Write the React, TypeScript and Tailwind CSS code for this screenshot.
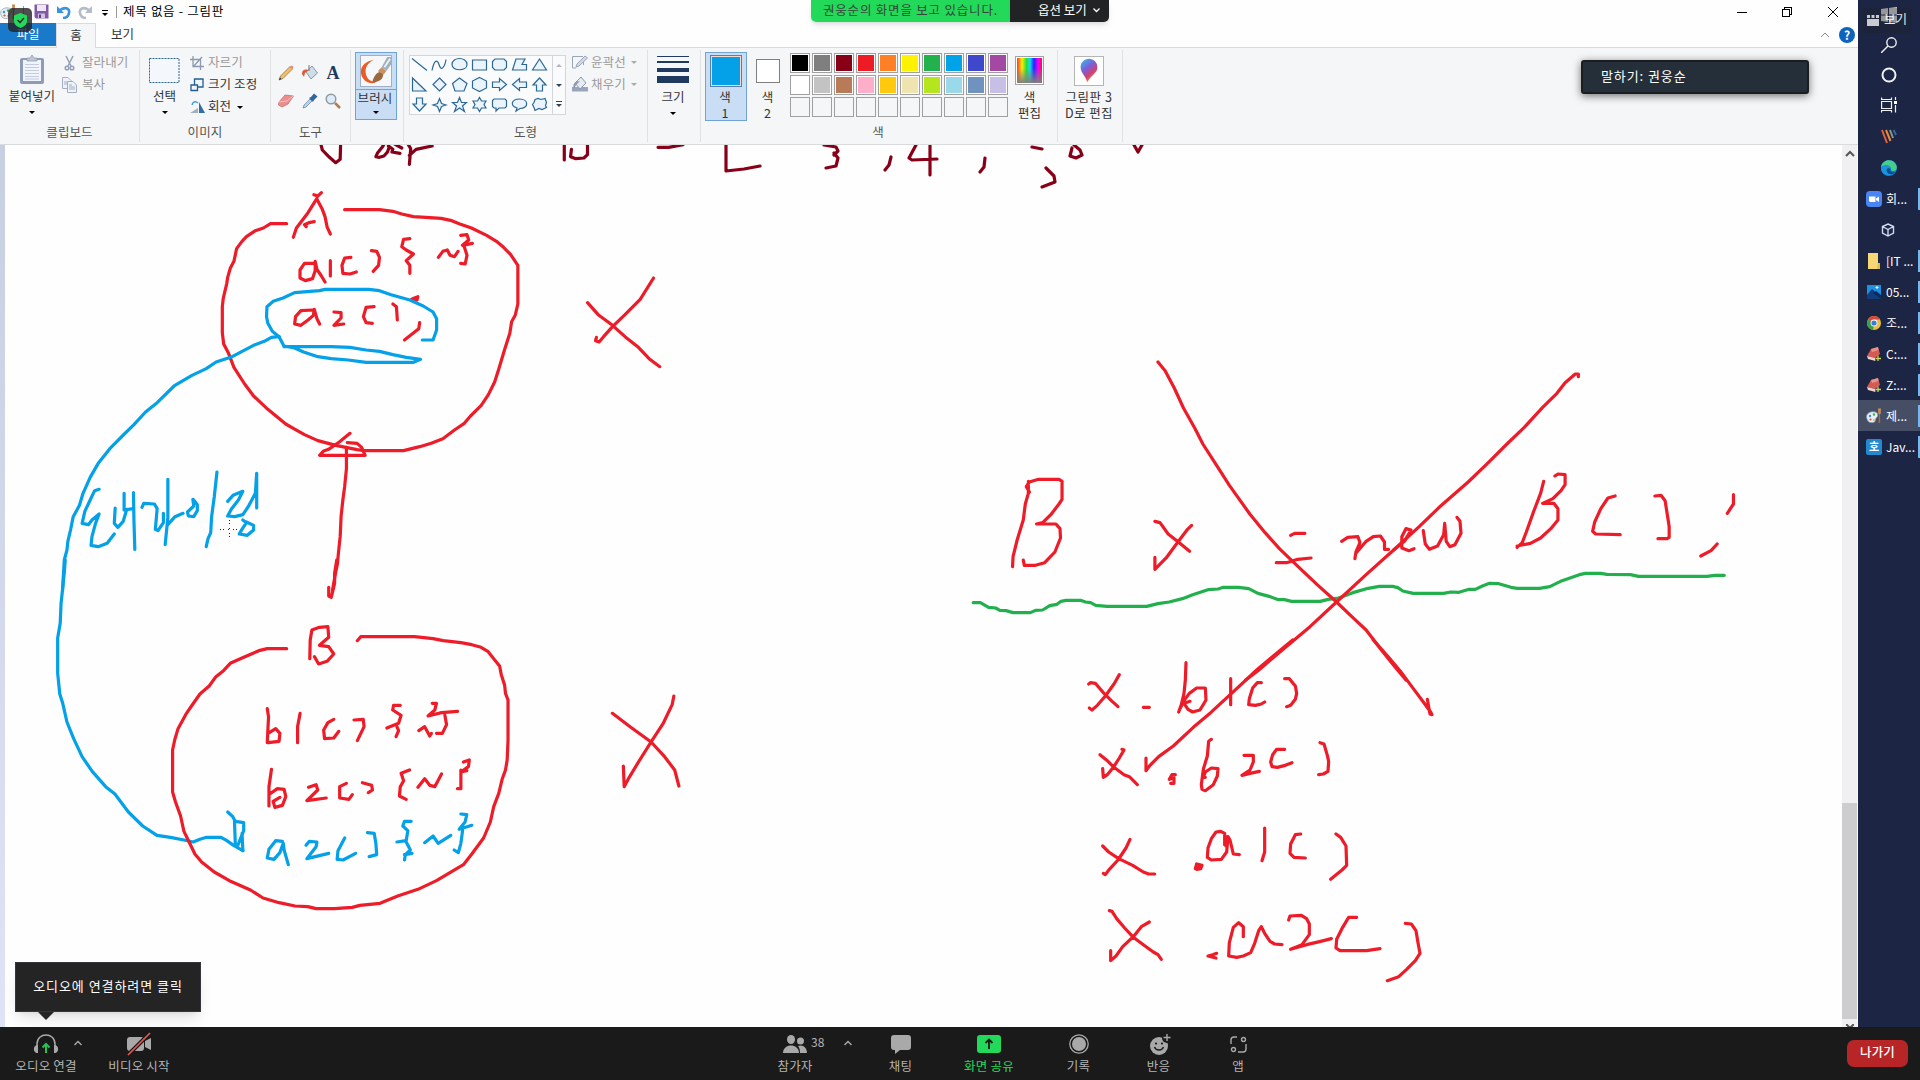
import React from "react";

type Group = { transform: string; strokes: [string, string][] };

const RED = "#ed1c28";
const BLUE = "#04a0e8";
const GREEN = "#22b04c";
const MAROON = "#880018";

// Brush strokes, grouped by the area of the sheet they belong to.
const drawing: Group[] = [
  {
    transform: "translate(0 140) scale(0.44643 0.33333)",
    strokes: [
      [MAROON, "M718 8 L722 30 738 52 752 68 762 58 763 8"],
      [MAROON, "M862 8 L856 22 846 38 842 50 850 52 860 48 868 36 872 20 M870 18 L880 28 878 36 896 40 M884 12 L900 24 M912 8 L920 26 917 73 M917 46 L932 28 968 18"],
      [MAROON, "M1264 8 V60 M1280 28 L1278 50 1290 56 1308 54 1316 44 1316 8"],
      [MAROON, "M1474 22 H1498 L1530 14"],
      [RED, "M703 164 L712 168 720 158 M710 175 L690 218 664 264 657 292 M710 178 L722 208 728 230 733 262 740 282 M704 245 L692 248 682 254 686 260"],
      [RED, "M642 251 H606 L590 264 572 272 552 290 542 304 530 326 524 364 516 384 510 412 508 430 500 476 498 500 V578 L501 612 512 640 524 682 548 732 568 768 600 808 640 852 658 866 682 884 712 902 752 916 800 929 816 932 H904 L940 920 966 910 992 896 1018 870 1040 850 1054 828 1078 796 1094 764 1108 726 1118 684 1130 630 1142 580 1146 545 1154 526 1160 492 V376 L1144 344 1128 322 1112 304 1090 286 1056 264 1030 252 1012 242 988 235 954 232 926 230 900 222 880 214 850 209 H772"],
      [RED, "M704 370 L682 370 672 390 672 414 684 422 700 416 706 392 706 364 710 388 720 408 728 426 M740 362 V408 M786 352 L772 354 766 376 768 400 784 402 798 396 M832 332 L844 334 850 352 848 376 836 394"],
      [RED, "M918 296 L904 298 900 320 910 330 926 342 910 362 918 376 918 400 M982 352 L992 334 1002 330 1008 346 1018 350 1026 334 M1032 286 L1046 284 1050 300 1036 316 1058 310 M1040 320 L1046 346 1042 372 1032 370"],
      [RED, "M700 510 L674 512 662 530 660 552 674 556 690 540 702 526 704 508 710 536 716 552 M748 516 L764 518 764 534 748 556 770 552 M838 500 L820 502 814 530 820 548 834 550 M880 492 L888 500 890 540 M940 548 L938 566 906 600 M924 476 L936 470 934 480 922 478"],
      [BLUE, "M625 590 L610 574 600 550 597 530 598 500 612 484 634 474 660 458 716 452 728 448 H826 L850 452 876 464 918 480 948 498 970 516 978 536 978 570 970 600 H946"],
      [BLUE, "M625 590 L608 592 592 604 568 616 520 650 484 666 462 686 430 706 390 738 352 788 326 816 300 854 274 888 246 926 220 970 202 1012 186 1060 178 1096 164 1130 158 1170 152 1204 150 1230 144 1260 140 1350"],
      [BLUE, "M625 590 L636 618 660 624 680 636 712 650 742 656 780 660 820 667 H926 L942 658 910 652 880 644 850 634 820 630 784 622 742 620 H636"],
      [RED, "M784 880 L760 906 736 928 724 934 716 946 H818 L810 922 800 910 778 908 M776 922 V986 L772 1040 768 1080 764 1130 762 1190 758 1240 756 1270 750 1310 745 1350"],
      [RED, "M1316 488 L1340 524 1372 556 1400 590 1430 622 1454 656 1478 680 M1464 414 L1434 478 1400 524 1372 560 1352 590 1342 606 1334 602 1336 592"],
      [BLUE, "M222 1048 L212 1052 202 1080 190 1114 184 1150 198 1154 206 1140 222 1122 214 1150 206 1190 204 1216 220 1220 240 1210 256 1182"],
      [BLUE, "M258 1104 L256 1150 264 1162 276 1144 284 1108 M278 1060 V1110 M278 1110 L298 1106 M299 1058 L300 1140 302 1228 M318 1102 L322 1090 346 1092 352 1106 348 1168 354 1172 366 1148 366 1120 M376 1018 V1132 L370 1214 M376 1154 L392 1130 410 1120"],
      [BLUE, "M432 1078 L434 1098 420 1116 422 1128 434 1130 442 1112 442 1094 434 1080 M486 996 L480 1070 474 1130 472 1178 466 1196 462 1220"],
      [BLUE, "M510 1084 L522 1066 544 1054 534 1080 518 1108 510 1128 526 1130 544 1124 556 1100 572 1060 575 1000 V1104 M544 1140 L552 1148 542 1168 536 1182 554 1186 568 1170 568 1156 552 1146"],
    ],
  },
  {
    transform: "translate(40 560) scale(0.42088 0.33333)",
    strokes: [
      [BLUE, "M60 0 L58 34 54 84 50 130 48 190 42 234 V340 L47 402 54 430 64 486 80 536 100 590 124 634 156 680 178 702 210 756 244 798 278 826 310 832 342 840 364 846 380 838 396 832 H430 L444 842 460 856 482 872"],
      [BLUE, "M446 756 L458 770 464 784 484 788 V812 L470 856 M462 782 L464 850 M480 820 L482 872"],
      [RED, "M705 0 L700 40 700 70 692 112 686 108 686 82"],
      [RED, "M586 266 H540 L520 272 480 294 452 310 436 332 418 350 402 378 380 402 360 438 348 460 328 506 320 540 315 570 V696 L322 726 334 768 342 814 352 840 368 882 384 906 414 936 450 962 500 990 530 1014 568 1028 606 1038 636 1040 656 1046 H700 L742 1042 760 1036 808 1030 850 1008 898 988 942 962 1006 914 1026 882 1054 834 1070 786 1078 740 1090 700 1098 658 1106 630 1110 600 1112 540 V420 L1106 400 1104 376 1096 344 1092 318 1078 296 1064 274 1048 262 1026 254 1000 248 958 242 934 236 890 230 H762 L754 242"],
      [RED, "M641 296 L642 240 646 210 664 202 684 200 686 232 664 256 686 260 698 282 682 304 662 312 652 290"],
      [RED, "M540 446 L543 470 540 548 M542 520 L560 506 570 520 568 544 542 548 M618 460 L612 500 612 548 M698 478 L684 488 674 510 676 536 698 534 710 514 M746 480 L768 478 770 500 754 542"],
      [RED, "M856 436 L840 436 838 450 858 466 852 490 824 504 M848 500 L852 512 846 530 M900 512 L914 500 926 528 930 520 M932 430 L942 430 938 450 922 468 954 458 992 454 M962 466 L966 494 956 520 942 520"],
      [RED, "M550 628 L544 680 544 738 M546 702 L564 686 580 688 584 710 576 736 558 742 554 724 570 712 M638 682 L656 674 660 690 634 722 680 714 M728 670 L712 680 712 714 734 718 742 704 M766 668 L788 676 790 690 780 698"],
      [RED, "M878 630 L858 640 864 662 856 680 854 708 870 718 M898 682 L914 656 926 676 938 680 954 642 M1006 606 L1020 600 1018 620 1000 636 L1014 632 M1000 630 V686 H992"],
      [BLUE, "M576 844 L560 842 544 868 540 894 556 898 570 878 578 850 580 870 590 914 M632 856 L640 844 658 846 656 860 634 896 686 880 M724 834 L708 872 706 898 720 900 750 880 M778 818 L794 820 798 850 800 884 782 890"],
      [BLUE, "M882 784 L866 784 862 798 874 812 870 842 848 846 M870 846 L880 870 868 884 866 900 M866 884 L884 880 M914 848 L934 828 946 850 976 826 M1000 762 L1014 764 1010 786 996 808 1026 796 M1004 812 L1000 850 994 878 984 870"],
      [RED, "M1360 460 L1402 500 1452 546 1484 590 1508 630 1518 678 M1506 408 L1502 434 1480 492 1452 546 1420 610 1400 652 1388 680 1386 618"],
    ],
  },
  {
    transform: "translate(960 340) scale(0.5102 0.33333)",
    strokes: [
      [GREEN, "M26 788 H40 L56 802 70 804 78 811 90 812 104 818 H138 L148 811 162 810 176 797 190 793 198 784 208 781 H236 L246 786 256 788 266 796 288 799 H366 L388 791 410 786 436 776 456 764 486 749 506 747 516 742 H546 L566 746 584 760 606 769 624 779 636 779 650 784 H706 L722 778 742 774 770 758 800 745 822 739 H848 L858 743 868 753 888 760 H948 L962 756 978 757 998 748 1010 748 1024 738 1038 730 1056 731 1080 742 1092 745 H1136 L1156 740 1180 722 1214 704 1226 700 H1256 L1268 703 1314 704 1330 709 H1464 L1480 706 H1498"],
      [RED, "M388 66 L402 92 420 144 438 204 460 264 476 312 502 374 528 436 568 522 598 578 626 626 652 664 700 734 738 786 768 830 796 870 826 930 850 976 874 1020"],
      [RED, "M1212 110 V102 H1206 L1186 128 1170 160 1142 202 1106 262 1072 312 1034 370 996 426 942 498 900 560 850 630 796 704 738 786 686 860 624 940 584 992 560 1020"],
      [RED, "M136 456 L130 440 136 426 154 418 H194 L200 424 V478 L194 492 178 524 162 548 150 552 H188 L196 566 197 594 186 636 166 668 148 676 H126 L124 660 M134 424 L134 460 128 492 124 540 112 600 104 650 103 680"],
      [RED, "M382 544 L392 548 408 582 428 606 450 634 M454 556 L446 568 426 608 404 654 382 688 V652"],
      [RED, "M648 586 L656 580 H676 M620 668 H640 L662 658 688 654"],
      [RED, "M748 604 L760 592 780 590 784 608 776 636 774 656 M776 640 L796 604 810 590 824 588 832 606 832 628 840 628 M850 630 L872 602 884 570 874 566 866 590 866 624 880 632 890 626 M908 572 L912 612 920 628 936 618 948 584 950 550 953 604 960 620 970 614 982 580 980 544 974 532"],
      [RED, "M1144 424 L1138 460 1124 516 1110 576 1102 608 1092 622 M1166 408 L1172 402 1186 404 V434 L1178 452 1162 476 1142 490 H1164 L1172 506 V540 L1158 566 1138 594 1118 610 1092 618"],
      [RED, "M1284 468 L1270 474 1256 506 1244 546 1240 574 1246 582 1294 584 M1362 468 L1374 466 1382 482 1388 540 1390 560 1390 592 1386 596 1368 596 M1516 464 V492 L1504 520 M1484 612 L1472 632 1452 648"],
    ],
  },
  {
    transform: "translate(1040 640) scale(0.33333)",
    strokes: [
      [RED, "M758 0 L700 48 650 90 590 146 512 218 460 262 400 318 356 350 330 376 318 392 V354 M1000 0 L1044 50 1080 92 1120 146 1150 186 1172 216 1176 224 1170 222 1162 178"],
      [RED, "M146 132 L152 128 166 130 190 158 214 182 234 200 M238 104 L222 132 196 168 172 196 156 210 148 204 M310 202 H328"],
      [RED, "M438 68 L436 120 432 160 424 194 416 216 M420 206 L432 182 448 160 470 144 496 144 498 180 480 210 458 216 444 208 432 190 450 184 M572 116 V194 M664 128 L652 128 638 144 628 176 626 194 646 196 664 192 674 186 M734 116 H748 L766 138 770 160 766 178 752 196 740 200"],
      [RED, "M180 344 L204 364 222 382 252 404 268 410 292 434 M246 328 L252 330 238 354 220 382 202 404 190 412 188 386 M406 404 L396 404 388 418 402 414 402 430 392 430"],
      [RED, "M514 298 L506 304 502 348 490 388 484 434 486 448 496 452 520 434 532 408 534 386 514 384 496 396 490 412 496 412 M612 346 H640 V366 L630 390 606 406 630 400 658 394 M734 328 L710 328 698 344 692 366 696 380 712 382 736 376 756 368 M840 308 L852 312 862 346 866 364 864 394 850 402 836 404"],
      [RED, "M188 618 L206 636 236 656 278 676 310 696 326 702 344 702 M270 598 L258 624 234 660 208 688 196 704 190 700 M466 686 L470 672 486 676 482 686 470 688 M476 680 L482 682"],
      [RED, "M554 614 V580 L542 574 528 576 514 596 504 624 502 652 514 660 544 658 560 636 564 590 L570 600 580 642 598 644 M558 590 V618 M674 564 V636 L666 662 M782 582 L766 584 752 612 750 640 762 652 796 654 M888 582 L902 592 918 618 920 676 906 690 872 718"],
      [RED, "M208 812 L216 814 230 836 254 864 278 890 310 914 340 936 354 944 364 958 M328 846 L304 860 280 890 248 920 228 948 212 962 V932 M530 940 L518 944 504 948 528 954"],
      [RED, "M610 890 V860 L596 848 580 862 568 908 566 948 590 952 610 948 632 938 644 910 656 872 664 860 674 880 690 904 704 912 726 914 M746 840 L750 828 784 826 800 836 808 852 808 884 786 914 752 928 800 914 842 904 874 896 M950 832 H926 L908 862 890 898 888 924 900 932 980 932 1020 926 M1096 850 L1114 852 1128 872 1134 908 1140 940 1126 962 1100 988 1076 1010 1042 1022"],
    ],
  },
  {
    transform: "",
    strokes: [
      [MAROON, "M726 140 V171 L744 169 760 166"],
      [MAROON, "M824 145 L836 147 838 151 834 155 M834 153 L838 158 836 166 826 168"],
      [MAROON, "M891 157 L889 165 885 170 M916 145 L909 158 912 160 937 159 M930 145 V175"],
      [MAROON, "M985 158 L984 167 980 172 M1032 147 L1042 149 M1046 168 L1054 176 1055 182 1042 187"],
      [MAROON, "M1074 145 L1080 150 1082 155 1076 158 1070 156 1072 148 M1134 145 L1138 152 1142 145"],
    ],
  },
];

const Down = ({ c = "border-t-black" }: { c?: string }) => (
  <span className={`block size-0 border-x-[3px] border-t-[3px] border-x-transparent ${c}`} />
);

const shapes: string[] = [
  "M1 2L16 14",
  "M1 14C3 4 6 2 8 8C10 16 14 10 15 3",
  "M1 8C1 0 16 0 16 8C16 15 1 15 1 8Z",
  "M1.500 3.500H15.500V13.500H1.500Z",
  "M4 2.500H13L15.500 5V11L13 13.500H4L1.500 11V5Z",
  "M5 2.500H14L11 8H15.500V13.500H1.500Z",
  "M8.500 2.500L15.500 13.500H1.500Z",
  "M1.500 1.500V14.500H15Z",
  "M8.500 1.500L15 8L8.500 14.500L2 8Z",
  "M8.500 1.500L16 7L13 14.500H4L1.500 7Z",
  "M8.500 1L15.500 4.500V11.500L8.500 15L1.500 11.500V4.500Z",
  "M1.500 5.500H8.500V2L15.500 8L8.500 14V11H1.500Z",
  "M15.500 5.500H8.500V2L1.500 8L8.500 14V11H15.500Z",
  "M5.500 14.500V8.500H2L8.500 1.500L15 8.500H11.500V14.500Z",
  "M5.500 1.500V7.500H2L8.500 14.500L15 7.500H11.500V1.500Z",
  "M8.500 2L10.500 7L15 8.500L10.500 10L8.500 15L6.500 10L2 8.500L6.500 7Z",
  "M8.500 1L10.500 6H15.500L11.500 9.500L13.500 15L8.500 11.500L3.500 15L5.500 9.500L1.500 6H6.500Z",
  "M8.500 1L10.500 4.500H15L13 8L15 11.500H10.500L8.500 15L6.500 11.500H2L4 8L2 4.500H6.500Z",
  "M3 2.500H14L15.500 4V10L14 11.500H8L5 14.500V11.500H3L1.500 10V4Z",
  "M5 14.500L6 11.500C-2 9 1 2.500 8.500 2.500C18 2.500 18 12 9 12Z",
  "M4 3L7 2L10 3L14 2L15.500 6L14.500 9L15.500 11L11 13L8 12L4 14L3 11L1.500 8L3 6Z",
];

const palette = [
  ["#000000", "#7f7f7f", "#880015", "#ed1c24", "#ff7f27", "#fff200", "#22b14c", "#00a2e8", "#3f48cc", "#a349a4"],
  ["#ffffff", "#c3c3c3", "#b97a57", "#ffaec9", "#ffc90e", "#efe4b0", "#b5e61d", "#99d9ea", "#7092be", "#c8bfe7"],
  ["", "", "", "", "", "", "", "", "", ""],
];

const PaintIcon = () => (
  <svg className="size-4 shrink-0" viewBox="0 0 16 16">
    <path d="M1 11C-1 6 4 3 9 4C13 5 12 9 10 10C9 12 10 14 7 14.500C4 15 2 14 1 11Z" fill="#e6eef2" stroke="#7fa3ba" strokeWidth=".7" />
    <circle cx="4" cy="8" r="1.200" fill="#3d8fd0" />
    <circle cx="8" cy="6.500" r="1.200" fill="#44ae57" />
    <circle cx="4.500" cy="11.500" r="1.100" fill="#e24d3c" />
    <circle cx="7.800" cy="12" r="1" fill="#e6b53a" />
    <path d="M13 5L12.500 15H14.200L14 5Z" fill="#a9683a" />
    <path d="M12 .5H15L14.700 6H12.300Z" fill="#c98b54" />
  </svg>
);

function TitleBar() {
  return (
    <div className="flex h-[23px] items-center bg-[#fefefe]">
      <PaintIcon />
      <span className="ml-[7px] h-3 w-px bg-[#999]" />
      <svg className="ml-[10px] size-[15px]" viewBox="0 0 15 15">
        <path d="M.5.500H14.500V14.500H2L.5 13Z" fill="#8259a8" />
        <path d="M3 1H12V7H3Z" fill="#eee8f4" />
        <path d="M4 9.500H11V14.500H4Z" fill="#cfc2dd" />
        <path d="M5 10.500H7V14H5Z" fill="#5e3d82" />
      </svg>
      <svg className="ml-2 size-[14px]" viewBox="0 0 14 14">
        <path d="M3 5C9 1 13 4 12 8C11.500 11 9 13 6 13" fill="none" stroke="#3a94dd" strokeWidth="2.600" />
        <path d="M0 1V8H7Z" fill="#3a94dd" />
      </svg>
      <svg className="ml-[7px] size-[14px]" viewBox="0 0 14 14">
        <path d="M11 5C5 1 1 4 2 8C2.500 11 5 13 8 13" fill="none" stroke="#b4bcc8" strokeWidth="2.600" />
        <path d="M14 1V8H7Z" fill="#b4bcc8" />
      </svg>
      <span className="ml-[9px] mt-[2px] flex w-[7px] flex-col items-center gap-[2px]">
        <span className="h-px w-[6px] bg-black" />
        <Down />
      </span>
      <span className="ml-[8px] h-3 w-px bg-[#999]" />
      <span className="ml-[6px] text-[12.500px] tracking-[0.700px] text-black">제목 없음 - 그림판</span>
      <svg className="ml-auto mr-[17px] h-5 w-[104px]" viewBox="0 0 104 20" fill="none" stroke="#000" shapeRendering="crispEdges">
        <path d="M0 10.500H10M45.500 7.500H52.500V14.500H45.500ZM47.500 7V5.500H54.500V12.500H53" />
        <path d="M91 5L101 15M101 5L91 15" shapeRendering="auto" />
      </svg>
    </div>
  );
}

function Tabs() {
  return (
    <div className="flex h-[24px] items-stretch bg-[#fefefe] text-[12.500px] leading-[22px] text-[#333]">
      <div className="mb-px w-14 bg-[#1979ca] text-center text-white">파일</div>
      <div className="relative z-[1] -mb-px w-[40px] border border-b-0 border-[#dadbdc] bg-[#f5f6f7] text-center">홈</div>
      <div className="ml-[15px]">보기</div>
      <svg className="ml-auto mt-[8px] h-[8px] w-[10px]" viewBox="0 0 10 8" fill="none" stroke="#888">
        <path d="M1 6L5 2L9 6" />
      </svg>
      <div className="ml-[9px] mr-[3px] mt-[4px] flex size-4 items-center justify-center rounded-full bg-[#0c63bd] text-[12px] font-bold text-white">?</div>
    </div>
  );
}

const groupBase = "relative flex shrink-0 flex-col border-r border-[#e0e1e3] my-[2px]";
const GroupLabel = ({ children }: { children: React.ReactNode }) => (
  <div className="mt-auto h-[18px] text-center leading-[15px] text-[#555]">{children}</div>
);

function Ribbon() {
  return (
    <div className="flex h-[98px] border-y border-[#dadbdc] bg-[#f5f6f7] text-[12.500px] tracking-[0.100px] text-[#333]">
      {/* Clipboard */}
      <div className={`${groupBase} w-[140px]`}>
        <div className="flex">
          <div className="ml-[8px] flex w-[48px] flex-col items-center pt-[4px]">
            <svg className="h-[31px] w-[26px]" viewBox="0 0 26 31">
              <rect x="1" y="4" width="24" height="26" rx="2" fill="#8e9cba" />
              <rect x="4" y="6" width="18" height="21" fill="#f0f4fb" />
              <path d="M8 7V4H11L13 1L15 4H18V7Z" fill="#bfc6d4" stroke="#8a94aa" strokeWidth=".7" />
              <path d="M6 10.500H20M6 13.500H20M6 16.500H20M6 19.500H20M6 22.500H20M6 25H20" stroke="#c3cbdc" />
            </svg>
            <span className="mt-[3px] whitespace-nowrap leading-[16px]">붙여넣기</span>
            <span className="mt-[7px]"><Down /></span>
          </div>
          <div className="ml-[6px] pt-[2px] text-[#9a9a9a]">
            <div className="flex h-[22px] items-center">
              <svg className="w-[15px] h-4" viewBox="0 0 15 16" fill="none" stroke="#94a0b8" strokeWidth="1.500">
                <path d="M4 1L9 11M11 1L6 11" />
                <circle cx="5" cy="13" r="1.800" /><circle cx="10" cy="13" r="1.800" />
              </svg>
              <span className="-mt-[2px] ml-[5px]">잘라내기</span>
            </div>
            <div className="flex h-[22px] items-center">
              <svg className="w-[15px] h-4" viewBox="0 0 15 16" fill="#eff2f8" stroke="#a3aec4">
                <path d="M.5.500H6L9.500 4V11.500H.5Z" /><path d="M5.500 4.500H11L14.500 8V15.500H5.500Z" />
                <path d="M7 8H10M7 10H13M7 12H13M2 5H5M2 7H5" />
              </svg>
              <span className="-mt-[2px] ml-[5px]">복사</span>
            </div>
          </div>
        </div>
        <GroupLabel>클립보드</GroupLabel>
      </div>
      {/* Image */}
      <div className={`${groupBase} w-[131px]`}>
        <div className="flex">
          <div className="ml-[9px] flex w-[31px] flex-col items-center pt-[8px]">
            <svg className="h-[26px] w-[31px]" viewBox="0 0 31 26">
              <rect x=".5" y=".5" width="29.500" height="24" fill="#f4f8fd" stroke="#2c6596" strokeDasharray="2 1" />
            </svg>
            <span className="mt-[4px] leading-[16px]">선택</span>
            <span className="mt-[7px]"><Down /></span>
          </div>
          <div className="ml-[10px] pt-[1px]">
            <div className="flex h-[23px] items-center text-[#9a9a9a]">
              <svg className="w-[14px] h-[14px]" viewBox="0 0 14 14" fill="none" stroke="#8e9ab0" strokeWidth="1.300">
                <path d="M3 0V10.500H14M0 3.500H10.500V14M3 11L12 1" />
              </svg>
              <span className="ml-[4px]">자르기</span>
            </div>
            <div className="flex h-[22px] items-center whitespace-nowrap">
              <svg className="w-[14px] h-[14px]" viewBox="0 0 14 14" fill="#eef6fd" stroke="#245d8e" strokeWidth="1.300">
                <path d="M4.500 1H13V9H4.500Z" /><path d="M1 7H7.500V12.500H1Z" />
              </svg>
              <span className="-mt-[2px] ml-[4px]">크기 조정</span>
            </div>
            <div className="flex h-[22px] items-center">
              <svg className="w-[16px] h-[14px]" viewBox="0 0 16 14">
                <path d="M0 13L8 8V13Z" fill="#a9afb7" /><path d="M9 13V2L15 13Z" fill="#2f6fa6" />
                <path d="M2 5C3 1 6 1 8 3" fill="none" stroke="#4a9de0" strokeWidth="1.500" />
              </svg>
              <span className="-mt-[2px] ml-[2px]">회전</span>
              <span className="ml-[6px]"><Down /></span>
            </div>
          </div>
        </div>
        <GroupLabel>이미지</GroupLabel>
      </div>
      {/* Tools */}
      <div className={`${groupBase} w-[80px]`}>
        <div className="ml-[7px] mt-[15px] grid grid-cols-[24px_24px_24px] grid-rows-[28px_28px] *:size-4">
          <svg viewBox="0 0 16 16"><path d="M1 15L2.500 11L12 1.500L14.500 4L5 13.500Z" fill="#eec06b" stroke="#8d6a36" strokeWidth=".7" /><path d="M1 15L2 12.500L3.500 14Z" fill="#333" /><path d="M12 1.500L14.500 4L15.500 2L14 .5Z" fill="#dc8b83" /></svg>
          <svg viewBox="0 0 16 16"><path d="M4 7L10 1L15.500 8L9 14Z" fill="#cfdde8" stroke="#6d8496" strokeWidth=".8" /><path d="M7 6V0" stroke="#777" /><path d="M0 9C0 4 4 4 7 5L3 8L2 12Z" fill="#df5a3a" /></svg>
          <span className="-ml-px text-center font-['Liberation_Serif',serif] text-[18px] font-bold leading-[17px] text-[#1e3a5f]">A</span>
          <svg viewBox="0 0 16 16"><path d="M1 9L7 2L15.500 3L10 11L4 14L.5 12Z" fill="#ec8e8c" stroke="#c06468" strokeWidth=".7" /><path d="M1 9L9 8L15 3" fill="none" stroke="#f8c5c2" /></svg>
          <svg viewBox="0 0 16 16"><path d="M1 15L2 12L8 6L10 8L4 14Z" fill="#b9d4e9" stroke="#5e7f9c" strokeWidth=".7" /><path d="M7 5L9 4L12 .5L15.500 3.500L12 7L11 9Z" fill="#2d679d" /></svg>
          <svg className="-ml-px" viewBox="0 0 16 16"><circle cx="6" cy="6" r="4.800" fill="#dcebf7" stroke="#9098a0" strokeWidth="1.400" /><path d="M10 10L15 15" stroke="#b47a4e" strokeWidth="2.500" /></svg>
        </div>
        <GroupLabel>도구</GroupLabel>
      </div>
      {/* Brushes */}
      <div className={`${groupBase} w-[53px]`}>
        <div className="ml-[4px] mt-[2px] flex h-[68px] w-[42px] flex-col items-center border border-[#6fa3da] bg-[#c9def5]">
          <div className="flex h-[37px] w-full justify-center border-b border-[#6fa3da] pt-[2px]">
            <svg className="h-8 w-8 border border-[#9fb0c4]" viewBox="0 0 32 32">
              <rect width="32" height="32" fill="#f5f7fa" />
              <path d="M14 4C-4 7 -3 23 7 28C12 30 15 29 17 27C10 28 6 24 5 18C4 11 9 6 14 4Z" fill="#ee5a24" />
              <path d="M12 28C14 20 18 16 23 17C25 22 22 28 12 28Z" fill="#9a6740" />
              <path d="M18 16L22 12L27 16L24 20Z" fill="#c89262" />
              <path d="M22 12L28 1H32V9L27 16Z" fill="#a2afbd" />
              <path d="M25 12L31 3" stroke="#eef3f8" strokeWidth="2" />
            </svg>
          </div>
          <span className="-ml-[2px] whitespace-nowrap leading-[16px]">브러시</span>
          <span className="mt-[5px]"><Down /></span>
        </div>
      </div>
      {/* Shapes */}
      <div className={`${groupBase} w-[244px]`}>
        <div className="flex pt-[5px]">
          <div className="ml-[5px] flex h-[60px] w-[157px] border border-[#d4d6d9] bg-[#fafbfc]">
            <div className="grid w-[142px] grid-cols-[repeat(7,20px)] grid-rows-[repeat(3,20px)] pl-[1px]">
              {shapes.map((d, i) => (
                <svg key={i} className="h-[17px] w-[17px]" viewBox="0 0 17 16" fill={i < 2 ? "none" : "#e9f4fc"} stroke="#2d6796" strokeWidth="1.200">
                  <path d={d} />
                </svg>
              ))}
            </div>
            <div className="flex w-[13px] flex-col items-center border-l border-[#d4d6d9] pt-[8px]">
              <span className="size-0 border-x-[3px] border-b-[3px] border-x-transparent border-b-[#b5b5b5]" />
              <span className="mt-[17px]"><Down c="border-t-[#345]" /></span>
              <span className="mt-[14px] mb-[2px] h-px w-[6px] bg-[#345]" />
              <Down c="border-t-[#345]" />
            </div>
          </div>
          <div className="ml-[6px] -mt-[4px] text-[#9a9a9a]">
            <div className="flex h-[22px] items-center">
              <svg className="w-[16px] h-[14px]" viewBox="0 0 16 14" fill="none" stroke="#9aa5bb"><path d="M11 1.500H.5V13H4M11.500 10V7" /><path d="M4 12L5 9L13 1L15.500 3L7 11Z" fill="#d3d9e6" /></svg>
              <span className="ml-[3px]">윤곽선</span>
              <span className="ml-[5px]"><Down c="border-t-[#aaa]" /></span>
            </div>
            <div className="flex h-[22px] items-center">
              <svg className="w-[16px] h-[16px]" viewBox="0 0 16 16"><path d="M0 11H16V15.500H0Z" fill="#9aa5bb" /><path d="M3 7L9 1L14 7L8 13Z" fill="#e6eaf2" stroke="#8e99b0" /><path d="M2 13C0 8 3 5 8 5L4 9Z" fill="#8e99b0" /></svg>
              <span className="ml-[3px]">채우기</span>
              <span className="ml-[5px]"><Down c="border-t-[#aaa]" /></span>
            </div>
          </div>
        </div>
        <GroupLabel>도형</GroupLabel>
      </div>
      {/* Size */}
      <div className={`${groupBase} w-[53px] items-center pr-[2px] pt-[6px]`}>
        <div className="flex flex-col *:w-8 *:bg-[#1f3a5f]">
          <span className="h-px" /><span className="mt-[4px] h-[2px]" /><span className="mt-[5px] h-[4px]" /><span className="mt-[4px] h-[7px]" />
        </div>
        <span className="mt-[6px] leading-[16px]">크기</span>
        <span className="mt-[7px]"><Down /></span>
      </div>
      {/* Colours */}
      <div className={`${groupBase} w-[357px]`}>
        <div className="flex">
          <div className="ml-[4px] mt-[2px] flex h-[69px] w-[42px] flex-col items-center border border-[#6fa3da] bg-[#c9def5] pt-[2px]">
            <span className="size-8 border border-[#5b7fa8] bg-[#f6d9cd] p-px"><span className="block size-full bg-[#04a0e8]" /></span>
            <span className="mt-[2px] -ml-[2px] leading-[16px]">색</span>
            <span className="-ml-[2px] leading-[15px]">1</span>
          </div>
          <div className="mr-[2px] flex w-[41px] flex-col items-center pt-[9px]">
            <span className="size-6 border border-[#808080] bg-white" />
            <span className="mt-[6px] leading-[16px]">색</span>
            <span className="leading-[15px]">2</span>
          </div>
          <div className="mt-[3px] grid grid-cols-[repeat(10,20px)] content-start gap-[2px]">
            {palette.flat().map((c, i) => (
              <span key={i} className={`h-5 w-5 border border-[#a0a0a0] p-px ${c ? "bg-white" : "bg-[#f5f6f7]"}`}>
                <span className="block size-full" style={{ backgroundColor: c || undefined }} />
              </span>
            ))}
          </div>
          <div className="ml-px flex w-[41px] flex-col items-center pt-[6px]">
            <span className="size-[29px] border border-[#a3a3a3] bg-white p-px">
              <span className="block size-full bg-[linear-gradient(180deg,transparent_40%,#808080),linear-gradient(90deg,#f33,#fe0_20%,#2d4_38%,#1de_52%,#22f_68%,#e0f_84%,#f13)]" />
            </span>
            <span className="mt-[4px] leading-[16px]">색</span>
            <span className="leading-[15px]">편집</span>
          </div>
        </div>
        <GroupLabel><span className="mr-[2px]">색</span></GroupLabel>
      </div>
      {/* Paint 3D */}
      <div className={`${groupBase} w-[65px] items-center pr-[2px] pt-[6px]`}>
        <svg className="size-[30px] border border-[#b5b5b5] bg-white" viewBox="0 0 30 30">
          <defs>
            <linearGradient id="drop" x1="0" y1="0" x2=".6" y2="1">
              <stop offset="0" stopColor="#33c5ee" /><stop offset=".45" stopColor="#7a5fd8" /><stop offset=".75" stopColor="#d6406e" /><stop offset="1" stopColor="#f0a030" />
            </linearGradient>
          </defs>
          <path d="M15 2C20 2 24 6 24 11C24 17 18 19 13 27C12 21 6 17 6 11C6 6 10 2 15 2Z" fill="url(#drop)" />
        </svg>
        <span className="mt-[3px] whitespace-nowrap leading-[16px] tracking-[0.600px]">그림판 3</span>
        <span className="whitespace-nowrap leading-[15px] tracking-[0.400px]">D로 편집</span>
      </div>
    </div>
  );
}

function Canvas() {
  return (
    <div className="flex min-h-0 flex-1">
      <div className="w-[5px] bg-linear-to-b from-[#c7cfe2] to-[#dfe3f5]" />
      <svg className="h-[882px] w-[1837px] bg-[#fefefe]" viewBox="5 145 1837 882" fill="none" strokeWidth="3.200" strokeLinecap="round" strokeLinejoin="round">
        {drawing.map((g, i) => (
          <g key={i} transform={g.transform || undefined}>
            {g.strokes.map(([c, d], j) => (
              <path key={j} d={d} stroke={c} vectorEffect="non-scaling-stroke" />
            ))}
          </g>
        ))}
        <path d="M220 529.500H238M229.500 520V539" stroke="#222" strokeWidth="1" strokeDasharray="1 2 1 4 1 4" strokeLinecap="butt" />
      </svg>
      <div className="flex w-[16px] flex-col items-center border-r border-[#f8f9fd] bg-[#f0eff1]">
        <svg className="mt-[5px] h-[8px] w-[10px] shrink-0" viewBox="0 0 10 8" fill="none" stroke="#555" strokeWidth="2"><path d="M1 6L5 2L9 6" /></svg>
        <div className="mt-auto h-[216px] w-full shrink-0 bg-[#cdcccf]" />
        <svg className="mt-[5px] h-[3px] w-[8px] shrink-0" viewBox="0 0 8 3" fill="none" stroke="#555" strokeWidth="2"><path d="M0 0L4 4L8 0" /></svg>
      </div>
    </div>
  );
}

const Eraser = () => (
  <svg className="size-4" viewBox="0 0 16 16">
    <path d="M1 10L5 3L12 1L14 8L9 12Z" fill="#d65a52" /><path d="M1 10L9 12L9.500 15L2 13Z" fill="#f2d3cb" />
    <path d="M12 9.500V15M9.500 12.500H15" stroke="#c6d44a" strokeWidth="1.300" /><path d="M5 3L12 1L12.500 4L6 6Z" fill="#e8938a" />
  </svg>
);

const apps: { icon: React.ReactNode; label?: string; active?: boolean }[] = [
  {
    icon: (
      <svg className="size-4" viewBox="0 0 16 16" strokeWidth="2">
        <path d="M1 1L6 14" stroke="#e4623e" /><path d="M5 1L9.500 12" stroke="#e98a3c" /><path d="M9 1L12 9" stroke="#8f9c84" /><path d="M12.500 1L15 6" stroke="#2f6aa3" />
      </svg>
    ),
  },
  {
    icon: (
      <svg className="size-4" viewBox="0 0 16 16">
        <circle cx="8" cy="8" r="8" fill="#1577cf" />
        <path d="M0 7C1 1 7-1 11 .8C15 3 17 7 15 10C13 12 9 11 10 9C10 5 4 4 0 7Z" fill="#47cf8a" />
        <path d="M0 7C4 4 10 5 10 9C5 7 6 14 12 13C9 17 2 16 0 10Z" fill="#1b94de" />
        <path d="M10 9C8 10 9 13 14 12C12 15 8 15 6 12C5 10 6 7 10 9Z" fill="#0d4b93" />
      </svg>
    ),
  },
  {
    label: "회...",
    icon: (
      <svg className="size-4" viewBox="0 0 16 16"><rect width="16" height="16" rx="4" fill="#4a86f2" /><path d="M3 5.500H9.500V11H4L3 10ZM10 7.500L13 5.500V11L10 9Z" fill="#fff" /></svg>
    ),
  },
  {
    icon: (
      <svg className="mr-[2px] size-[14px]" viewBox="0 0 14 14" fill="none" stroke="#cfdcf0" strokeWidth="1.400"><path d="M7 1L12.500 3.500V10L7 13L1.500 10V3.500ZM1.500 3.500L7 6.500L12.500 3.500M7 6.500V13" /></svg>
    ),
  },
  { label: "[IT ...", icon: <svg className="size-4" viewBox="0 0 16 16"><path d="M2 0H12V10H14V16H2Z" fill="#f7d774" /><path d="M12 10H14V16H11Z" fill="#e3b94a" /></svg> },
  {
    label: "05...",
    icon: <svg className="size-4" viewBox="0 0 16 16"><rect x="1" y="1" width="14" height="14" fill="#1f8fe0" /><path d="M1 11L6 5L15 13V15H1Z" fill="#123c7c" /><path d="M7 9L10 7L15 11V15Z" fill="#0b2b5e" /><path d="M11 2V5M9.500 3.500H12.500" stroke="#fff" /></svg>,
  },
  {
    label: "조...",
    icon: (
      <svg className="size-4" viewBox="0 0 16 16">
        <circle cx="8" cy="8" r="7" fill="#e9bf3b" /><path d="M8 8L2 4.400C4 0 12 0 14 4.500H8Z" fill="#d8493c" /><path d="M8 8L2 4.400C-.5 8 2 14 7.300 15Z" fill="#3b9c52" />
        <circle cx="8" cy="8" r="3.400" fill="#fff" /><circle cx="8" cy="8" r="2.600" fill="#3f78dd" />
      </svg>
    ),
  },
  { label: "C:...", icon: <Eraser /> },
  { label: "Z:...", icon: <Eraser /> },
  { label: "제...", icon: <PaintIcon />, active: true },
  { label: "Jav...", icon: <span className="flex size-4 items-center justify-center rounded-[2px] bg-[#2389cf] text-[11px] font-bold leading-none text-white">호</span> },
];

function Taskbar() {
  return (
    <div className="flex w-[62px] flex-col bg-[#1c2543] text-[12px] text-white">
      <div className="mb-[1px] flex flex-col *:flex *:h-[30px] *:items-center *:justify-center">
        <div>
          <svg className="size-4" viewBox="0 0 16 16" fill="#c9cbd0"><path d="M0 2L7 1V7.500H0ZM8 1L16 0V7.500H8ZM0 8.500H7V15L0 14ZM8 8.500H16V16L8 15Z" /></svg>
        </div>
        <div>
          <svg className="size-4" viewBox="0 0 16 16" fill="none" stroke="#f0f2f5" strokeWidth="1.400"><circle cx="10.500" cy="5.500" r="4.700" /><path d="M7 9L0 16" /></svg>
        </div>
        <div>
          <svg className="size-4" viewBox="0 0 16 16" fill="none" stroke="#f0f2f5" strokeWidth="2"><circle cx="8" cy="8" r="6.500" /></svg>
        </div>
        <div>
          <svg className="size-4" viewBox="0 0 16 16" fill="none" stroke="#f0f2f5" strokeWidth="1.200"><path d="M.6 4.500H10.500V11.500H.6ZM.6.500V2.500H10.500V.5M.6 15.500V13.500H10.500V15.500M14.500 0V3M14.500 8V15.500" /><path d="M13 4H16V7H13Z" fill="#fff" stroke="none" /></svg>
        </div>
      </div>
      {apps.map((a, i) => (
        <div
          key={i}
          className={`flex h-[31px] items-center ${a.active ? "bg-[#464e66]" : ""} ${a.label ? "justify-start pl-[8px]" : "justify-center"}`}
        >
          {a.icon}
          {a.label && <span className="ml-[4px] whitespace-nowrap">{a.label}</span>}
          {a.label && <span className="ml-auto h-[22px] w-[2px] bg-[#78b6ee]" />}
        </div>
      ))}
    </div>
  );
}

const Caret = () => (
  <svg className="h-[6px] w-[8px]" viewBox="0 0 8 6" fill="none" stroke="#aaa" strokeWidth="1.400"><path d="M.5 5L4 1.500L7.500 5" /></svg>
);

function Item({ w, label, green, children }: { w: string; label: string; green?: boolean; children: React.ReactNode }) {
  return (
    <div className={`flex shrink-0 flex-col items-center ${w}`}>
      <div className="flex h-[22px] items-center justify-center">{children}</div>
      <span className={`mt-[3px] whitespace-nowrap leading-[16px] ${green ? "text-[#23d959]" : "text-[#b4b4b4]"}`}>{label}</span>
    </div>
  );
}

function ZoomBar() {
  return (
    <div className="flex h-[53px] bg-[#1a1a1a] pt-[6px] text-[12.500px] tracking-[0.200px]">
      <Item w="w-[92px]" label="오디오 연결">
        <svg className="h-[20px] w-[26px]" viewBox="0 0 26 20">
          <path d="M4 13V10C4-2 22-2 22 10V13" fill="none" stroke="#a9a9a9" strokeWidth="1.500" />
          <path d="M5 11V19C0 20-1 11 5 11ZM21 11V19C26 20 27 11 21 11Z" fill="#a9a9a9" />
          <path d="M13 19V10M9.500 13.500L13 10L16.500 13.500" fill="none" stroke="#23c552" strokeWidth="2" />
        </svg>
      </Item>
      <div className="-ml-[18px] w-[8px] pt-[7px]"><Caret /></div>
      <Item w="w-[114px]" label="비디오 시작">
        <svg className="h-[24px] w-[26px]" viewBox="0 0 26 24">
          <rect x="1" y="5" width="17" height="14" rx="3" fill="#a9a9a9" /><path d="M19 9L25 6V18L19 15Z" fill="#a9a9a9" />
          <path d="M2 23L24 1" stroke="#1a1a1a" strokeWidth="4" /><path d="M2 23L24 1" stroke="#e8554d" strokeWidth="1.700" />
        </svg>
      </Item>
      <div className="ml-[564px] flex">
        <Item w="w-[70px]" label="참가자">
          <svg className="h-[20px] w-[24px]" viewBox="0 0 24 20" fill="#a9a9a9">
            <ellipse cx="8" cy="5.500" rx="4" ry="4.500" /><path d="M0 19C0 9 16 9 16 19Z" /><circle cx="17.500" cy="7" r="3.500" /><path d="M17 19C17 15 16 13 15 12C20 10 24 14 24 19Z" />
          </svg>
        </Item>
        <div className="-ml-[19px] w-[33px] text-[12px] leading-[17px] text-[#b4b4b4]">38</div>
        <div className="w-[8px] pt-[7px]"><Caret /></div>
      </div>
      <Item w="w-[97px]" label="채팅">
        <svg className="h-[19px] w-[20px]" viewBox="0 0 20 19" fill="#a9a9a9"><path d="M3 0H17Q20 0 20 3V12Q20 15 17 15H9L4 19V15H3Q0 15 0 12V3Q0 0 3 0Z" /></svg>
      </Item>
      <Item w="w-[80px]" label="화면 공유" green>
        <svg className="h-[18px] w-[24px]" viewBox="0 0 24 18"><rect width="24" height="18" rx="3" fill="#23d959" /><path d="M12 14V5M8.500 8L12 4.500L15.500 8" fill="none" stroke="#1a1a1a" strokeWidth="1.800" /></svg>
      </Item>
      <Item w="w-[99px]" label="기록">
        <svg className="size-5" viewBox="0 0 20 20"><circle cx="10" cy="10" r="9.200" fill="none" stroke="#a9a9a9" strokeWidth="1.300" /><circle cx="10" cy="10" r="7" fill="#a9a9a9" /></svg>
      </Item>
      <Item w="w-[61px]" label="반응">
        <svg className="ml-[2px] h-[21px] w-[22px]" viewBox="0 0 22 21"><circle cx="10" cy="12" r="9" fill="#a9a9a9" /><circle cx="18" cy="4" r="5" fill="#1a1a1a" /><path d="M18 0V7M14.500 3.500H21.500" stroke="#a9a9a9" strokeWidth="1.400" /><path d="M5.500 13C7 17 13 17 14.500 13" fill="none" stroke="#1a1a1a" strokeWidth="1.400" /><circle cx="7" cy="9.500" r="1.100" fill="#1a1a1a" /><circle cx="13" cy="9.500" r="1.100" fill="#1a1a1a" /></svg>
      </Item>
      <Item w="w-[98px]" label="앱">
        <svg className="size-[17px]" viewBox="0 0 17 17" fill="none" stroke="#a9a9a9" strokeWidth="1.400"><path d="M1 8V4Q1 1 4 1H7M16 8V13Q16 16 13 16H8" /><circle cx="13.500" cy="3.500" r="2" /><circle cx="3.500" cy="13.500" r="2" /></svg>
      </Item>
      <div className="ml-auto mr-[12px] mt-[7px] h-[27px] w-[61px] rounded-[7px] bg-[#b82526] text-center font-medium leading-[24px] text-white">나가기</div>
    </div>
  );
}

function Overlays() {
  return (
    <>
      <div className="absolute left-[8px] top-[8px] flex size-6 items-center justify-center rounded-[5px] bg-[#222]/80">
        <svg className="h-[15px] w-[13px]" viewBox="0 0 13 15"><path d="M6.500 0L13 2.500V8C13 12 9 14 6.500 15C4 14 0 12 0 8V2.500Z" fill="#23d959" /><path d="M3.500 7L6 9.500L10 5" fill="none" stroke="#222" strokeWidth="1.400" /></svg>
      </div>
      <div className="absolute left-[811px] top-0 flex h-[22px] overflow-hidden rounded-b-[5px] text-[12.500px] leading-[20px] shadow-md">
        <div className="w-[199px] whitespace-nowrap bg-[#23d959] pl-[12px] tracking-[0.800px] text-[#33453a]">권웅순의 화면을 보고 있습니다.</div>
        <div className="flex w-[99px] items-center bg-[#222325] pb-[2px] pl-[28px] text-white">
          옵션 보기
          <svg className="ml-[6px] mt-px h-[5px] w-[7px]" viewBox="0 0 7 5" fill="none" stroke="#fff" strokeWidth="1.300"><path d="M.5.500L3.500 3.500L6.500.500" /></svg>
        </div>
      </div>
      <div className="absolute left-[1581px] top-[60px] h-[34px] w-[228px] rounded-[3px] border-2 border-[#1b1d20] bg-[#252f39] pl-[18px] text-[13px] leading-[28px] tracking-[0.900px] text-white shadow-[0_2px_8px_rgba(0,0,0,0.55)]">
        말하기: 권웅순
      </div>
      <div className="absolute left-[1862px] top-[8px] flex h-[25px] w-[50px] items-center rounded-[5px] bg-[#222]/30 pl-[5px] text-[12.500px] text-white/90">
        <svg className="-mt-px h-[11px] w-[12px] shrink-0" viewBox="0 0 12 11" fill="#c9cbd0"><path d="M0 0H3V3H0ZM4.500 0H7.500V3H4.500ZM9 0H12V3H9ZM0 4H12V11H0Z" /></svg>
        <span className="-mt-[3px] ml-[5px] whitespace-nowrap">보기</span>
      </div>
      <div className="absolute left-[15px] top-[962px] h-[50px] w-[186px] whitespace-nowrap border border-[#35353a] bg-[#242424] text-center text-[13px] leading-[45px] tracking-[0.950px] text-white shadow-lg">
        오디오에 연결하려면 클릭
        <span className="absolute left-[22px] top-[49px] size-0 border-x-8 border-t-8 border-x-transparent border-t-[#242424]" />
      </div>
    </>
  );
}

export default function App() {
  return (
    <div className="relative flex h-[1080px] w-[1920px] flex-col overflow-hidden font-['Noto_Sans_CJK_KR','Noto_Sans',sans-serif]">
      <div className="flex h-[1027px]">
        <div className="flex w-[1858px] flex-col bg-[#fefefe]">
          <TitleBar />
          <Tabs />
          <Ribbon />
          <Canvas />
        </div>
        <Taskbar />
      </div>
      <ZoomBar />
      <Overlays />
    </div>
  );
}
